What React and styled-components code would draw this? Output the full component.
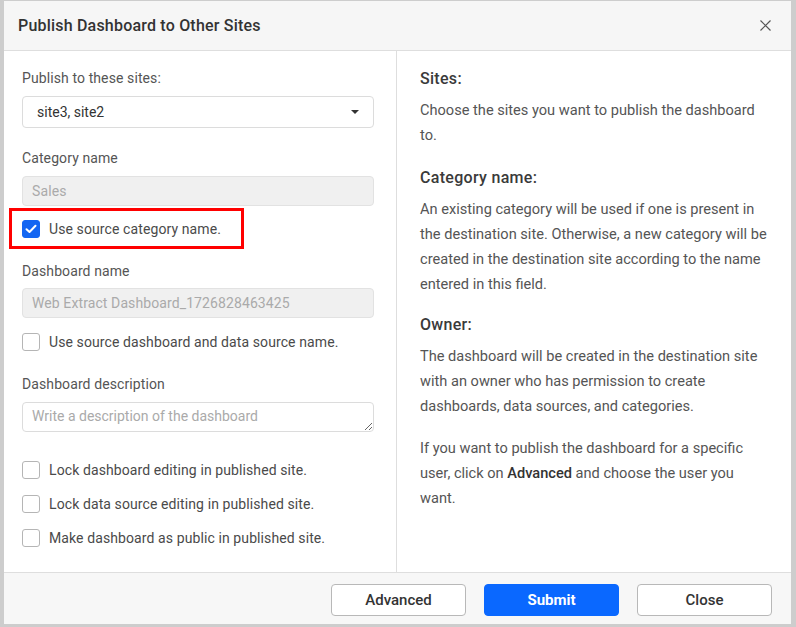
import React from 'react'
import styled, { createGlobalStyle } from 'styled-components'

const Global = createGlobalStyle`
    html, body {
        margin: 0;
        padding: 0;
    }
    body {
        background: #cdcdcd;
        font-family: Roboto, "Liberation Sans", sans-serif;
        width: 796px;
        height: 627px;
        overflow: hidden;
    }
`

const Dialog = styled.div`
    margin: 1px 0 0 4px;
    width: 787px;
    height: 623px;
    background: #fff;
    display: flex;
    flex-direction: column;
    box-sizing: border-box;
`

const Header = styled.div`
    height: 50px;
    box-sizing: border-box;
    background: #f6f6f6;
    border-bottom: 1px solid #dedede;
    display: flex;
    align-items: center;
    justify-content: space-between;
    padding: 0 19px 1px 14px;
`

const Title = styled.h1`
    margin: 0;
    font-size: 16px;
    font-weight: 500;
    letter-spacing: 0.2px;
    color: #333;
`

const CloseIcon = styled.button`
    border: none;
    background: transparent;
    padding: 0;
    width: 14px;
    height: 14px;
    display: flex;
    align-items: center;
    justify-content: center;
    cursor: pointer;
`

const Body = styled.div`
    flex: 1;
    display: flex;
    min-height: 0;
`

const LeftCol = styled.div`
    width: 393px;
    box-sizing: border-box;
    border-right: 1px solid #dedede;
    padding: 17px 22px 0 18px;
    display: flex;
    flex-direction: column;
`

const RightCol = styled.div`
    flex: 1;
    padding: 15px 19px 0 23px;
`

const Label = styled.div`
    font-size: 14px;
    line-height: 20px;
    color: #555;
    letter-spacing: 0.1px;
    margin-top: ${p => p.top || 0}px;
    margin-bottom: ${p => p.bottom || 8}px;
`

const Select = styled.div`
    height: 32px;
    box-sizing: border-box;
    border: 1px solid #dcdcdc;
    border-radius: 4px;
    display: flex;
    align-items: center;
    justify-content: space-between;
    padding: 0 14px 0 14px;
    font-size: 14px;
    color: #333;
`

const Caret = styled.span`
    width: 0;
    height: 0;
    border-left: 4px solid transparent;
    border-right: 4px solid transparent;
    border-top: 4px solid #333;
`

const Input = styled.input`
    height: 30px;
    box-sizing: border-box;
    width: 100%;
    border: 1px solid #e2e2e2;
    border-radius: 4px;
    background: ${p => (p.disabled ? '#f0f0f0' : '#fff')};
    padding: 0 9px;
    font-family: inherit;
    font-size: 14px;
    letter-spacing: 0.1px;
    color: #aaa;
    outline: none;
    &:disabled {
        color: #aaa;
        -webkit-text-fill-color: #aaa;
    }
`

const TextArea = styled.textarea`
    height: 30px;
    box-sizing: border-box;
    width: 100%;
    border: 1px solid #dcdcdc;
    border-radius: 4px;
    padding: 4px 9px;
    font-family: inherit;
    font-size: 14px;
    line-height: 18px;
    color: #333;
    resize: vertical;
    outline: none;
    overflow: hidden;
    &::placeholder {
        color: #aaa;
    }
`

const Highlight = styled.div`
    margin: 2px 0 12px -13px;
    width: 235px;
    height: 41px;
    box-sizing: border-box;
    border: 3px solid #f00;
    padding-left: 10px;
    display: flex;
    align-items: center;
`

const CheckRow = styled.label`
    display: flex;
    align-items: center;
    gap: 9px;
    height: 20px;
    font-size: 14px;
    color: #4a4a4a;
    letter-spacing: 0.1px;
    margin-top: ${p => p.top || 0}px;
    cursor: pointer;
`

const Box = styled.span`
    width: 18px;
    height: 18px;
    box-sizing: border-box;
    border-radius: 3px;
    border: 1px solid ${p => (p.checked ? '#1466f2' : '#b5b5b5')};
    background: ${p => (p.checked ? '#1466f2' : '#fff')};
    display: flex;
    align-items: center;
    justify-content: center;
    flex-shrink: 0;
`

const Heading = styled.h3`
    margin: ${p => p.top || 0}px 0 7px;
    font-size: 16px;
    font-weight: 500;
    line-height: 25px;
    letter-spacing: 0.3px;
    color: #3a3a3a;
`

const Para = styled.p`
    margin: ${p => p.top || 0}px 0 0;
    font-size: 14.6px;
    line-height: 25px;
    color: #555;
    b {
        font-weight: 500;
        color: #333;
    }
`

const Footer = styled.div`
    height: 52px;
    box-sizing: border-box;
    background: #f7f7f7;
    border-top: 1px solid #dedede;
    display: flex;
    align-items: center;
    justify-content: flex-end;
    gap: 18px;
    padding: 2px 19px 0 0;
`

const Button = styled.button`
    width: 135px;
    height: 32px;
    border-radius: 4px;
    font-family: inherit;
    font-size: 15px;
    font-weight: ${p => (p.primary ? 700 : 500)};
    border: 1px solid ${p => (p.primary ? '#0a68ff' : '#b8b8b8')};
    background: ${p => (p.primary ? '#0a68ff' : '#fff')};
    color: ${p => (p.primary ? '#fff' : '#333')};
    cursor: pointer;
`

const Check = ({ checked, children, top }) => (
    <CheckRow top={top}>
        <Box checked={checked}>
            {checked && (
                <svg width="12" height="10" viewBox="0 0 12 10">
                    <path d="M1.5 5.2 L4.5 8 L10.5 1.8" fill="none" stroke="#fff" strokeWidth="2" strokeLinecap="round" strokeLinejoin="round" />
                </svg>
            )}
        </Box>
        {children}
    </CheckRow>
)

const App = () => {
    return (
        <>
            <Global />
            <Dialog>
                <Header>
                    <Title>Publish Dashboard to Other Sites</Title>
                    <CloseIcon aria-label="close">
                        <svg width="11" height="11" viewBox="0 0 11 11">
                            <path d="M0.5 0.5 L10.5 10.5 M10.5 0.5 L0.5 10.5" stroke="#555" strokeWidth="1.2" />
                        </svg>
                    </CloseIcon>
                </Header>
                <Body>
                    <LeftCol>
                        <Label>Publish to these sites:</Label>
                        <Select>
                            site3, site2
                            <Caret />
                        </Select>
                        <Label top={20}>Category name</Label>
                        <Input disabled value="Sales" readOnly />
                        <Highlight>
                            <Check checked>Use source category name.</Check>
                        </Highlight>
                        <Label bottom={7}>Dashboard name</Label>
                        <Input disabled value="Web Extract Dashboard_1726828463425" readOnly />
                        <Check top={14}>Use source dashboard and data source name.</Check>
                        <Label top={22}>Dashboard description</Label>
                        <TextArea placeholder="Write a description of the dashboard" />
                        <Check top={28}>Lock dashboard editing in published site.</Check>
                        <Check top={14}>Lock data source editing in published site.</Check>
                        <Check top={14}>Make dashboard as public in published site.</Check>
                    </LeftCol>
                    <RightCol>
                        <Heading>Sites:</Heading>
                        <Para>Choose the sites you want to publish the dashboard to.</Para>
                        <Heading top={17}>Category name:</Heading>
                        <Para>
                            An existing category will be used if one is present in the destination site. Otherwise, a new category will be created in the destination site according to the name entered in this field.
                        </Para>
                        <Heading top={15}>Owner:</Heading>
                        <Para>
                            The dashboard will be created in the destination site with an owner who has permission to create dashboards, data sources, and categories.
                        </Para>
                        <Para top={17}>
                            If you want to publish the dashboard for a specific user, click on <b>Advanced</b> and choose the user you want.
                        </Para>
                    </RightCol>
                </Body>
                <Footer>
                    <Button>Advanced</Button>
                    <Button primary>Submit</Button>
                    <Button>Close</Button>
                </Footer>
            </Dialog>
        </>
    )
}

export default App
